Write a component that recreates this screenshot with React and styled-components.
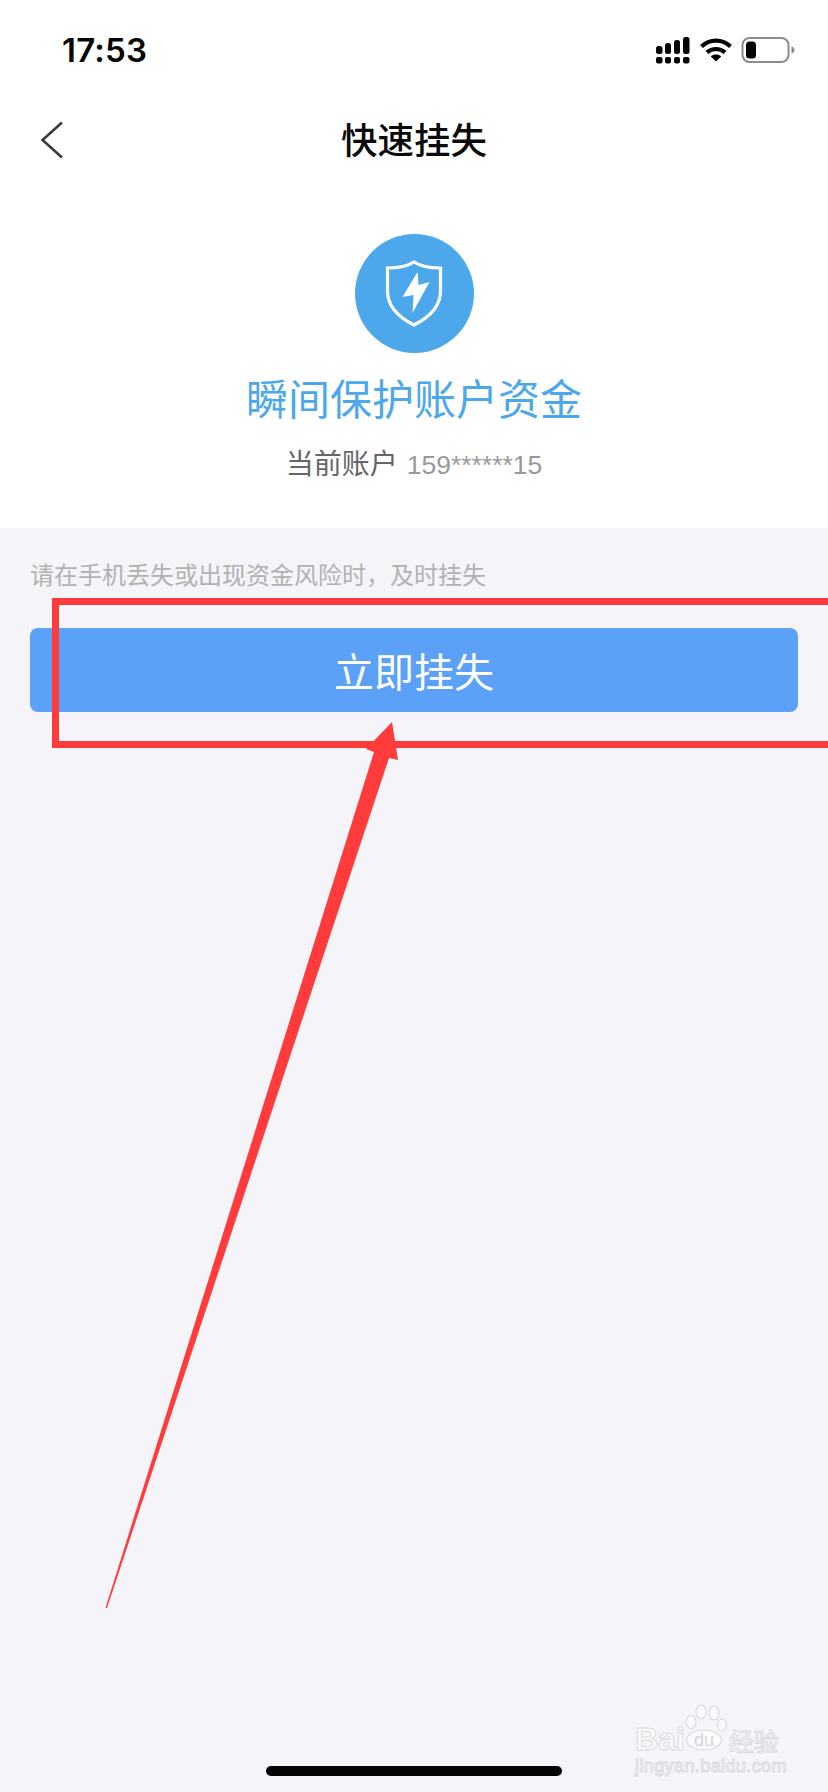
import React from "react";
import styled, { createGlobalStyle } from "styled-components";

const GlobalStyle = createGlobalStyle`
    html, body {
        margin: 0;
        padding: 0;
        background: #f3f3f8;
    }
    * {
        box-sizing: border-box;
    }
`;

const CJK = `"Liberation Sans", "Noto Sans CJK SC", sans-serif`;

const Page = styled.div`
    position: relative;
    width: 828px;
    height: 1792px;
    overflow: hidden;
    display: flex;
    flex-direction: column;
    background: #f4f4f9;
    font-family: ${CJK};
`;

const StatusBar = styled.div`
    height: 100px;
    padding: 0 33px 0 62px;
    display: flex;
    align-items: center;
    justify-content: space-between;
    background: #fff;
`;

const Time = styled.span`
    font-family: Inter, sans-serif;
    font-size: 33px;
    font-weight: 600;
    letter-spacing: 0.2px;
    color: #050505;
`;

const NavBar = styled.div`
    position: relative;
    height: 80px;
    display: flex;
    align-items: center;
    justify-content: center;
    background: #fff;
`;

const BackButton = styled.svg`
    position: absolute;
    left: 40px;
    top: 21px;
`;

const Title = styled.h1`
    margin: 0 0 4px;
    font-size: 36.5px;
    font-weight: 500;
    color: #0a0a0a;
`;

const Hero = styled.div`
    height: 348px;
    padding-top: 54px;
    display: flex;
    flex-direction: column;
    align-items: center;
    background: #fff;
`;

const Badge = styled.div`
    width: 119px;
    height: 119px;
    border-radius: 50%;
    background: #4ca8ea;
    display: flex;
    align-items: center;
    justify-content: center;
`;

const Heading = styled.h2`
    margin: 18px 0 0;
    font-size: 42px;
    line-height: 60px;
    font-weight: 400;
    color: #4ca8ea;
`;

const Account = styled.div`
    margin-top: 14px;
    line-height: 40px;
    font-size: 28px;
    color: #666;
`;

const AccountNumber = styled.span`
    margin-left: 9px;
    font-size: 26.5px;
    color: #999;
`;

const Content = styled.div`
    flex: 1;
    padding: 32px 30px 0 30px;
`;

const Hint = styled.p`
    margin: 0;
    font-size: 24px;
    line-height: 32px;
    color: #b2b2b2;
`;

const PrimaryButton = styled.button`
    display: block;
    width: 100%;
    height: 84px;
    margin-top: 36px;
    padding: 0;
    border: 0;
    border-radius: 8px;
    background: #5ba1f8;
    font-family: inherit;
    font-size: 40px;
    font-weight: 400;
    color: #fff;
`;

const Highlight = styled.div`
    position: absolute;
    left: 52px;
    top: 598px;
    width: 790px;
    height: 150px;
    border: 7px solid #ff3b3b;
    pointer-events: none;
`;

const ArrowMark = styled.svg`
    position: absolute;
    left: 0;
    top: 0;
    pointer-events: none;
`;

const HomeBar = styled.div`
    position: absolute;
    left: 266px;
    top: 1766px;
    width: 296px;
    height: 10px;
    border-radius: 5px;
    background: #050505;
`;

const Watermark = styled.div`
    position: absolute;
    left: 635px;
    top: 1704px;
    width: 160px;
`;

const WatermarkRow = styled.div`
    display: flex;
    align-items: flex-end;
    height: 48px;
`;

const WatermarkText = styled.span`
    flex-shrink: 0;
    font-size: ${props => props.size}px;
    font-weight: ${props => props.weight || 400};
    line-height: ${props => props.size * 0.82}px;
    letter-spacing: ${props => props.spacing || 0}px;
    color: rgba(255, 255, 255, 0.65);
    -webkit-text-stroke: 1px #dadadf;
`;

const WatermarkUrl = styled(WatermarkText)`
    display: block;
    margin-top: 7px;
    white-space: nowrap;
`;

const StatusIcons = styled.div`
    display: flex;
    align-items: center;
    gap: 9px;
`;

const SignalIcon = styled.svg`
    margin-right: 1px;
`;

const Signal = () => (
    <SignalIcon width="34" height="27" viewBox="0 0 34 27" fill="#050505">
        <rect x="0" y="9" width="6.5" height="8" rx="2.5" />
        <rect x="9" y="6" width="6" height="11" rx="2.5" />
        <rect x="18" y="3" width="6" height="14" rx="2.5" />
        <rect x="27" y="0" width="6.5" height="17" rx="2.5" />
        <rect x="0" y="20" width="6.5" height="6.5" rx="2" />
        <rect x="9" y="20" width="6" height="6.5" rx="2" />
        <rect x="18" y="20" width="6" height="6.5" rx="2" />
        <rect x="27" y="20" width="6.5" height="6.5" rx="2" />
    </SignalIcon>
);

const WifiIcon = () => (
    <svg width="32" height="24" viewBox="0 0 32 24" fill="none" stroke="#050505" strokeWidth="4.2">
        <path d="M1.5 8.5C9.5 .6 22.5 .6 30.5 8.5" />
        <path d="M7 14.5C12 9.8 20 9.8 25 14.5" />
        <path d="M16 23.5L10.8 18.5C13.6 15.9 18.4 15.9 21.2 18.5Z" fill="#050505" stroke="none" />
    </svg>
);

const BatteryIcon = () => (
    <svg width="54" height="26" viewBox="0 0 54 26">
        <rect x="1.500" y="1" width="46" height="24" rx="7" fill="none" stroke="#8c8c8c" strokeWidth="2" />
        <rect x="5" y="4.500" width="10" height="17" rx="3.500" fill="#050505" />
        <path d="M50.500 9.500C52.500 10 53.500 11.500 53.500 13C53.500 14.500 52.500 16 50.500 16.500Z" fill="#8c8c8c" />
    </svg>
);

const Paw = () => (
    <svg width="42" height="48" viewBox="0 0 42 48">
        <g fill="rgba(255,255,255,0.65)" stroke="#dadadf" strokeWidth="1.200">
            <ellipse cx="6" cy="18" rx="5" ry="6.500" />
            <ellipse cx="16" cy="8" rx="5" ry="7" />
            <ellipse cx="29" cy="9" rx="5" ry="7" />
            <ellipse cx="37" cy="21" rx="4.500" ry="6" />
            <ellipse cx="19" cy="36" rx="17.500" ry="10" />
        </g>
        <text x="19" y="42" textAnchor="middle" fontFamily="Liberation Sans" fontSize="18" fill="#d6d6db">du</text>
    </svg>
);

const PawSlot = styled.div`
    flex-shrink: 0;
    display: flex;
    margin-right: 2px;
`;

const App = () => (
    <Page>
        <GlobalStyle />
        <StatusBar>
            <Time>17:53</Time>
            <StatusIcons>
                <Signal />
                <WifiIcon />
                <BatteryIcon />
            </StatusIcons>
        </StatusBar>
        <NavBar>
            <BackButton width="24" height="38" viewBox="0 0 24 38" fill="none" stroke="#3c3c3c" strokeWidth="2.6">
                <path d="M22 1.500L2.500 19L22 36.500" />
            </BackButton>
            <Title>快速挂失</Title>
        </NavBar>
        <Hero>
            <Badge>
                <svg width="60" height="70" viewBox="0 0 60 70">
                    <path
                        d="M30 3C24 7 13 9 3.500 9V32C3.500 48 16 59 30 66C44 59 56.500 48 56.500 32V9C47 9 36 7 30 3Z"
                        fill="none"
                        stroke="#fff"
                        strokeWidth="3.200"
                    />
                    <path d="M33.500 13L18.500 38L29.500 36L28.500 54L45.500 23L34.500 26Z" fill="#fff" />
                </svg>
            </Badge>
            <Heading>瞬间保护账户资金</Heading>
            <Account>
                当前账户
                <AccountNumber>159******15</AccountNumber>
            </Account>
        </Hero>
        <Content>
            <Hint>{"请在手机丢失或出现资金风险时\uFF0C及时挂失"}</Hint>
            <PrimaryButton>立即挂失</PrimaryButton>
        </Content>
        <Highlight />
        <ArrowMark width="828" height="1792" viewBox="0 0 828 1792">
            <polygon
                points="392,722 366,749 374,752 105.500,1608 107,1608 389,758 398,760"
                fill="#ff3b3b"
            />
        </ArrowMark>
        <Watermark>
            <WatermarkRow>
                <WatermarkText size={32} weight={700}>Bai</WatermarkText>
                <PawSlot>
                    <Paw />
                </PawSlot>
                <WatermarkText size={25}>经验</WatermarkText>
            </WatermarkRow>
            <WatermarkUrl as="span" size={18} spacing={0.4}>jingyan.baidu.com</WatermarkUrl>
        </Watermark>
        <HomeBar />
    </Page>
);

export default App;
